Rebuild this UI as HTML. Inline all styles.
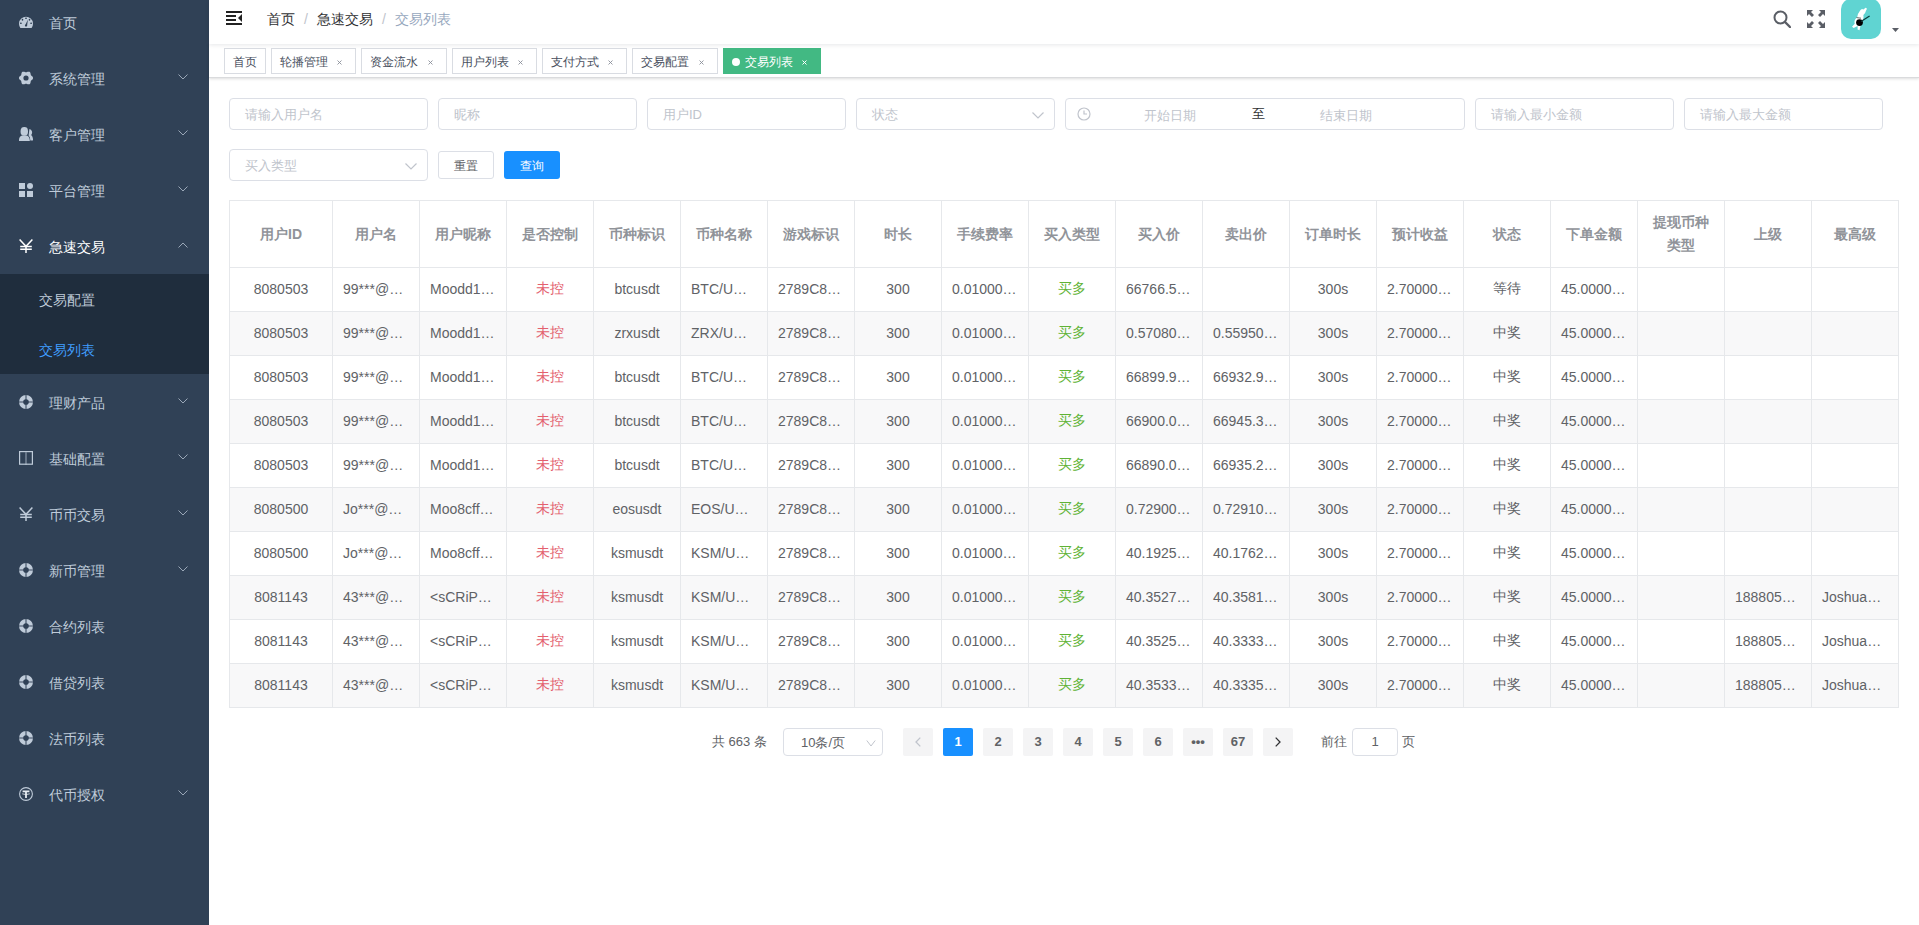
<!DOCTYPE html><html><head><meta charset="utf-8"><style>
*{box-sizing:border-box;margin:0;padding:0}
html,body{width:1919px;height:925px;overflow:hidden;background:#fff;font-family:"Liberation Sans",sans-serif;color:#606266}
.a{position:absolute}
.rn{position:absolute;z-index:5}
#sb{position:absolute;left:0;top:0;width:209px;height:925px;background:#304156;overflow:hidden}
.mi{position:absolute;left:0;width:209px;height:56px;color:#bfcbd9;font-size:14px}
.mi .t{position:absolute;left:49px;top:1px;line-height:56px;white-space:nowrap}
.mi svg.ic{position:absolute;left:19px;top:21px}
.mi svg.ar{position:absolute;left:178px;top:24px}
.sub{position:absolute;left:0;width:209px;height:50px;background:#1f2d3d;color:#bfcbd9;font-size:14px}
.sub .t{position:absolute;left:39px;top:1px;line-height:50px}
#nav{position:absolute;z-index:3;left:209px;top:0;width:1710px;height:44px;background:#fff;box-shadow:0 1px 4px rgba(0,21,41,.1)}
#tags{position:absolute;left:209px;top:44px;width:1710px;height:34px;background:#fff;border-bottom:1px solid #dadbdd;box-shadow:0 1px 3px 0 rgba(0,0,0,.12),0 0 3px 0 rgba(0,0,0,.04)}
.tag{position:absolute;top:4px;height:26px;line-height:24px;border:1px solid #d9dce2;font-size:12px;color:#495060;background:#fff;white-space:nowrap}
.tag .tx{position:absolute;left:8px;top:1px}
.tag .x{position:absolute;top:0;font-size:11px}
.inp{position:absolute;height:32px;border:1px solid #dcdfe6;border-radius:4px;background:#fff;font-size:13px;color:#c0c4cc}
.inp .p{position:absolute;left:15px;top:1px;line-height:30px;white-space:nowrap}
#tbl{position:absolute;left:229px;top:200px;border-collapse:collapse;table-layout:fixed;width:1670px}
#tbl td,#tbl th{border:1px solid #e6e8eb;text-align:center;font-size:14px;white-space:nowrap;overflow:hidden;padding:0}
#tbl th{height:67px;color:#909399;font-weight:bold;line-height:23px}
#tbl td{height:44px;color:#606266}
#tbl tr.s td{background:#f8f8f9}
#tbl td span{position:relative;top:-1px}
#tbl td.l{text-align:left;padding-left:10px}
.red{color:#e3606e!important}
.grn{color:#5fb336!important}
.pg{position:absolute;top:728px;width:30px;height:28px;background:#f4f4f5;border-radius:2px;color:#606266;font-size:13px;font-weight:bold;text-align:center;line-height:28px}
</style></head><body><div id="sb"><div class="mi" style="top:-6px;color:#bfcbd9"><svg class="ic" width="14" height="14" viewBox="0 0 14 14"><path d="M1.4 13 A7 7 0 1 1 12.6 13 Z" fill="#bfcbd9"/><g fill="#304156"><ellipse cx="7" cy="3.3" rx="1" ry="0.8"/><ellipse cx="3.5" cy="4.8" rx="0.8" ry="1"/><ellipse cx="10.5" cy="4.8" rx="0.8" ry="1"/><ellipse cx="1.9" cy="8.3" rx="1" ry="0.8"/><ellipse cx="12.1" cy="8.3" rx="1" ry="0.8"/><path d="M6.1 10.6 L8.9 4.6 L8.1 10.9Z"/><circle cx="7" cy="10.6" r="1.1"/></g></svg><span class="t">首页</span></div><div class="mi" style="top:50px;color:#bfcbd9"><svg class="ic" width="14" height="14" viewBox="0 0 14 14"><path d="M14.10 7.00 L13.98 7.61 L13.65 8.17 L13.18 8.66 L12.69 9.07 L12.25 9.45 L11.94 9.85 L11.75 10.32 L11.63 10.89 L11.53 11.53 L11.34 12.17 L11.02 12.74 L10.55 13.15 L9.96 13.35 L9.31 13.34 L8.66 13.18 L8.05 12.96 L7.50 12.77 L7.00 12.70 L6.50 12.77 L5.95 12.96 L5.34 13.18 L4.69 13.34 L4.04 13.35 L3.45 13.15 L2.98 12.74 L2.66 12.17 L2.47 11.53 L2.37 10.89 L2.25 10.32 L2.06 9.85 L1.75 9.45 L1.31 9.07 L0.82 8.66 L0.35 8.17 L0.02 7.61 L-0.10 7.00 L0.02 6.39 L0.35 5.83 L0.82 5.34 L1.31 4.93 L1.75 4.55 L2.06 4.15 L2.25 3.68 L2.37 3.11 L2.47 2.47 L2.66 1.83 L2.98 1.26 L3.45 0.85 L4.04 0.65 L4.69 0.66 L5.34 0.82 L5.95 1.04 L6.50 1.23 L7.00 1.30 L7.50 1.23 L8.05 1.04 L8.66 0.82 L9.31 0.66 L9.96 0.65 L10.55 0.85 L11.02 1.26 L11.34 1.83 L11.53 2.47 L11.63 3.11 L11.75 3.68 L11.94 4.15 L12.25 4.55 L12.69 4.93 L13.18 5.34 L13.65 5.83 L13.98 6.39Z M9.6 7 A2.6 2.6 0 1 0 4.4 7 A2.6 2.6 0 1 0 9.6 7Z" fill="#bfcbd9" fill-rule="evenodd"/></svg><span class="t">系统管理</span><svg class="ar" width="10" height="6" viewBox="0 0 10 6"><path d="M0.5 0.5 L5 5 L9.5 0.5" fill="none" stroke="#bfcbd9" stroke-width="1" opacity="0.75"/></svg></div><div class="mi" style="top:106px;color:#bfcbd9"><svg class="ic" width="14" height="14" viewBox="0 0 14 14"><path d="M10.4 1.9 A3.1 3.6 0 0 1 12.2 8 Q14.2 10 14 13 Q14 13.6 13.3 13.6 L10.9 13.6 Q11 10 9.6 8.6 Z" fill="#bfcbd9"/><g fill="#bfcbd9" stroke="#304156" stroke-width="1.1"><ellipse cx="5.3" cy="4.4" rx="3.7" ry="4.3"/><path d="M-0.1 14 Q-0.1 9.2 3.2 8.5 L7.4 8.5 Q10.8 9.2 10.8 14Z"/></g><g fill="#bfcbd9"><ellipse cx="5.3" cy="4.4" rx="3.7" ry="4.3"/><path d="M-0.1 14 Q-0.1 9.2 3.2 8.5 L7.4 8.5 Q10.8 9.2 10.8 14Z"/></g></svg><span class="t">客户管理</span><svg class="ar" width="10" height="6" viewBox="0 0 10 6"><path d="M0.5 0.5 L5 5 L9.5 0.5" fill="none" stroke="#bfcbd9" stroke-width="1" opacity="0.75"/></svg></div><div class="mi" style="top:162px;color:#bfcbd9"><svg class="ic" width="14" height="14" viewBox="0 0 14 14" fill="#bfcbd9"><rect x="0" y="0" width="6" height="6"/><circle cx="11" cy="3" r="3"/><rect x="0" y="8" width="6" height="6"/><rect x="8" y="8" width="6" height="6"/></svg><span class="t">平台管理</span><svg class="ar" width="10" height="6" viewBox="0 0 10 6"><path d="M0.5 0.5 L5 5 L9.5 0.5" fill="none" stroke="#bfcbd9" stroke-width="1" opacity="0.75"/></svg></div><div class="mi" style="top:218px;color:#ffffff"><svg class="ic" width="14" height="14" viewBox="0 0 14 14" fill="none" stroke="#ffffff" stroke-width="1.5"><path d="M0.6 0.6 L7 7.3 L13.4 0.6"/><path d="M1.2 7.4 H12.8 M1.2 10.3 H12.8 M7 7 V14"/></svg><span class="t">急速交易</span><svg class="ar" width="10" height="6" viewBox="0 0 10 6"><path d="M0.5 5.5 L5 1 L9.5 5.5" fill="none" stroke="#bfcbd9" stroke-width="1" opacity="0.75"/></svg></div><div class="sub" style="top:274px"><span class="t">交易配置</span></div><div class="sub" style="top:324px;color:#409eff"><span class="t">交易列表</span></div><div class="mi" style="top:374px"><svg class="ic" width="14" height="14" viewBox="0 0 14 14"><path d="M14 7 A7 7 0 1 0 0 7 A7 7 0 1 0 14 7Z M9.8 7 A2.8 2.8 0 1 1 4.2 7 A2.8 2.8 0 1 1 9.8 7Z" fill="#bfcbd9" fill-rule="evenodd"/><path d="M7 0 V14 M0 7 H14" stroke="#304156" stroke-width="1.1" opacity="0.9"/></svg><span class="t">理财产品</span><svg class="ar" width="10" height="6" viewBox="0 0 10 6"><path d="M0.5 0.5 L5 5 L9.5 0.5" fill="none" stroke="#bfcbd9" stroke-width="1" opacity="0.75"/></svg></div><div class="mi" style="top:430px"><svg class="ic" width="14" height="14" viewBox="0 0 14 14"><rect x="0.6" y="0.6" width="12.8" height="12.6" fill="none" stroke="#bfcbd9" stroke-width="1.2"/><path d="M7 1.2 V14" stroke="#bfcbd9" stroke-width="1.3" opacity="0.6"/></svg><span class="t">基础配置</span><svg class="ar" width="10" height="6" viewBox="0 0 10 6"><path d="M0.5 0.5 L5 5 L9.5 0.5" fill="none" stroke="#bfcbd9" stroke-width="1" opacity="0.75"/></svg></div><div class="mi" style="top:486px"><svg class="ic" width="14" height="14" viewBox="0 0 14 14" fill="none" stroke="#bfcbd9" stroke-width="1.5"><path d="M0.6 0.6 L7 7.3 L13.4 0.6"/><path d="M1.2 7.4 H12.8 M1.2 10.3 H12.8 M7 7 V14"/></svg><span class="t">币币交易</span><svg class="ar" width="10" height="6" viewBox="0 0 10 6"><path d="M0.5 0.5 L5 5 L9.5 0.5" fill="none" stroke="#bfcbd9" stroke-width="1" opacity="0.75"/></svg></div><div class="mi" style="top:542px"><svg class="ic" width="14" height="14" viewBox="0 0 14 14"><path d="M14 7 A7 7 0 1 0 0 7 A7 7 0 1 0 14 7Z M9.8 7 A2.8 2.8 0 1 1 4.2 7 A2.8 2.8 0 1 1 9.8 7Z" fill="#bfcbd9" fill-rule="evenodd"/><path d="M7 0 V14 M0 7 H14" stroke="#304156" stroke-width="1.1" opacity="0.9"/></svg><span class="t">新币管理</span><svg class="ar" width="10" height="6" viewBox="0 0 10 6"><path d="M0.5 0.5 L5 5 L9.5 0.5" fill="none" stroke="#bfcbd9" stroke-width="1" opacity="0.75"/></svg></div><div class="mi" style="top:598px"><svg class="ic" width="14" height="14" viewBox="0 0 14 14"><path d="M14 7 A7 7 0 1 0 0 7 A7 7 0 1 0 14 7Z M9.8 7 A2.8 2.8 0 1 1 4.2 7 A2.8 2.8 0 1 1 9.8 7Z" fill="#bfcbd9" fill-rule="evenodd"/><path d="M7 0 V14 M0 7 H14" stroke="#304156" stroke-width="1.1" opacity="0.9"/></svg><span class="t">合约列表</span></div><div class="mi" style="top:654px"><svg class="ic" width="14" height="14" viewBox="0 0 14 14"><path d="M14 7 A7 7 0 1 0 0 7 A7 7 0 1 0 14 7Z M9.8 7 A2.8 2.8 0 1 1 4.2 7 A2.8 2.8 0 1 1 9.8 7Z" fill="#bfcbd9" fill-rule="evenodd"/><path d="M7 0 V14 M0 7 H14" stroke="#304156" stroke-width="1.1" opacity="0.9"/></svg><span class="t">借贷列表</span></div><div class="mi" style="top:710px"><svg class="ic" width="14" height="14" viewBox="0 0 14 14"><path d="M14 7 A7 7 0 1 0 0 7 A7 7 0 1 0 14 7Z M9.8 7 A2.8 2.8 0 1 1 4.2 7 A2.8 2.8 0 1 1 9.8 7Z" fill="#bfcbd9" fill-rule="evenodd"/><path d="M7 0 V14 M0 7 H14" stroke="#304156" stroke-width="1.1" opacity="0.9"/></svg><span class="t">法币列表</span></div><div class="mi" style="top:766px"><svg class="ic" width="14" height="14" viewBox="0 0 14 14"><circle cx="7" cy="7" r="6.4" fill="none" stroke="#bfcbd9" stroke-width="1.1"/><path d="M3.6 3.6 H10.4 V5.2 H7.9 V11 H6.1 V5.2 H3.6Z" fill="#e8edf3"/><path d="M3.2 6.8 Q7 8.4 10.8 6.8" fill="none" stroke="#e8edf3" stroke-width="0.8"/></svg><span class="t">代币授权</span><svg class="ar" width="10" height="6" viewBox="0 0 10 6"><path d="M0.5 0.5 L5 5 L9.5 0.5" fill="none" stroke="#bfcbd9" stroke-width="1" opacity="0.75"/></svg></div></div><div id="nav"><svg class="a" style="left:17px;top:11px" width="16" height="14" viewBox="0 0 16 14"><rect x="0" y="0" width="16" height="2" fill="#222"/><rect x="0" y="4" width="10" height="2" fill="#222"/><rect x="0" y="8" width="10" height="2" fill="#222"/><rect x="0" y="12" width="16" height="2" fill="#222"/><path d="M16 3 L12 7 L16 11Z" fill="#222"/></svg><div class="a" style="left:58px;top:0;line-height:38px;font-size:14px;color:#303133;white-space:nowrap">首页<span style="color:#c0c4cc;margin:0 9px">/</span>急速交易<span style="color:#c0c4cc;margin:0 9px">/</span><span style="color:#97a8be">交易列表</span></div></div><div id="tags"><div class="tag" style="left:15px;width:42px"><span class="tx">首页</span></div><div class="tag" style="left:62px;width:85px"><span class="tx">轮播管理</span><svg class="a" style="left:65px;top:11px" width="5" height="5" viewBox="0 0 5 5"><path d="M0.5 0.5 L4.5 4.5 M4.5 0.5 L0.5 4.5" stroke="#8a8f99" stroke-width="0.9"/></svg></div><div class="tag" style="left:152px;width:86px"><span class="tx">资金流水</span><svg class="a" style="left:66px;top:11px" width="5" height="5" viewBox="0 0 5 5"><path d="M0.5 0.5 L4.5 4.5 M4.5 0.5 L0.5 4.5" stroke="#8a8f99" stroke-width="0.9"/></svg></div><div class="tag" style="left:243px;width:85px"><span class="tx">用户列表</span><svg class="a" style="left:65px;top:11px" width="5" height="5" viewBox="0 0 5 5"><path d="M0.5 0.5 L4.5 4.5 M4.5 0.5 L0.5 4.5" stroke="#8a8f99" stroke-width="0.9"/></svg></div><div class="tag" style="left:333px;width:85px"><span class="tx">支付方式</span><svg class="a" style="left:65px;top:11px" width="5" height="5" viewBox="0 0 5 5"><path d="M0.5 0.5 L4.5 4.5 M4.5 0.5 L0.5 4.5" stroke="#8a8f99" stroke-width="0.9"/></svg></div><div class="tag" style="left:423px;width:86px"><span class="tx">交易配置</span><svg class="a" style="left:66px;top:11px" width="5" height="5" viewBox="0 0 5 5"><path d="M0.5 0.5 L4.5 4.5 M4.5 0.5 L0.5 4.5" stroke="#8a8f99" stroke-width="0.9"/></svg></div><div class="tag" style="left:514px;width:98px;background:#42b983;border-color:#42b983;color:#fff"><span class="a" style="left:8px;top:9px;width:8px;height:8px;border-radius:50%;background:#fff"></span><span class="tx" style="left:21px">交易列表</span><svg class="a" style="left:78px;top:11px" width="5" height="5" viewBox="0 0 5 5"><path d="M0.5 0.5 L4.5 4.5 M4.5 0.5 L0.5 4.5" stroke="#fff" stroke-width="1"/></svg></div></div><div class="inp" style="left:229px;top:98px;width:199px"><span class="p">请输入用户名</span></div><div class="inp" style="left:438px;top:98px;width:199px"><span class="p">昵称</span></div><div class="inp" style="left:647px;top:98px;width:199px"><span class="p">用户ID</span></div><div class="inp" style="left:856px;top:98px;width:199px"><span class="p">状态</span><svg class="a" style="left:175px;top:13px" width="12" height="7" viewBox="0 0 12 7"><path d="M0.5 0.5 L6 6 L11.5 0.5" fill="none" stroke="#c0c4cc" stroke-width="1.2"/></svg></div><div class="inp" style="left:1065px;top:98px;width:400px"><svg class="a" style="left:11px;top:8px" width="14" height="14" viewBox="0 0 14 14"><circle cx="7" cy="7" r="6" fill="none" stroke="#c0c4cc" stroke-width="1.2"/><path d="M7 3.5 V7 H10" fill="none" stroke="#c0c4cc" stroke-width="1.2"/></svg><span class="p" style="left:78px;top:2px">开始日期</span><span class="a" style="left:186px;top:0;line-height:29px;color:#303133">至</span><span class="p" style="left:254px;top:2px">结束日期</span></div><div class="inp" style="left:1475px;top:98px;width:199px"><span class="p">请输入最小金额</span></div><div class="inp" style="left:1684px;top:98px;width:199px"><span class="p">请输入最大金额</span></div><div class="inp" style="left:229px;top:149px;width:199px"><span class="p">买入类型</span><svg class="a" style="left:175px;top:13px" width="12" height="7" viewBox="0 0 12 7"><path d="M0.5 0.5 L6 6 L11.5 0.5" fill="none" stroke="#c0c4cc" stroke-width="1.2"/></svg></div><div class="a" style="left:438px;top:151px;width:56px;height:28px;border:1px solid #dcdfe6;border-radius:3px;font-size:12px;color:#606266;text-align:center;line-height:28px">重置</div><div class="a" style="left:504px;top:151px;width:56px;height:28px;background:#1890ff;border-radius:3px;font-size:12px;color:#fff;text-align:center;line-height:30px">查询</div><table id="tbl"><colgroup><col style="width:103px"><col style="width:87px"><col style="width:87px"><col style="width:87px"><col style="width:87px"><col style="width:87px"><col style="width:87px"><col style="width:87px"><col style="width:87px"><col style="width:87px"><col style="width:87px"><col style="width:87px"><col style="width:87px"><col style="width:87px"><col style="width:87px"><col style="width:87px"><col style="width:87px"><col style="width:87px"><col style="width:87px"></colgroup><tr><th>用户ID</th><th>用户名</th><th>用户昵称</th><th>是否控制</th><th>币种标识</th><th>币种名称</th><th>游戏标识</th><th>时长</th><th>手续费率</th><th>买入类型</th><th>买入价</th><th>卖出价</th><th>订单时长</th><th>预计收益</th><th>状态</th><th>下单金额</th><th>提现币种<br>类型</th><th>上级</th><th>最高级</th></tr><tr><td><span>8080503</span></td><td class="l"><span>99***@…</span></td><td class="l"><span>Moodd1…</span></td><td class="red"><span>未控</span></td><td><span>btcusdt</span></td><td class="l"><span>BTC/U…</span></td><td class="l"><span>2789C8…</span></td><td><span>300</span></td><td class="l"><span>0.01000…</span></td><td class="grn"><span>买多</span></td><td class="l"><span>66766.5…</span></td><td></td><td><span>300s</span></td><td class="l"><span>2.70000…</span></td><td><span>等待</span></td><td class="l"><span>45.0000…</span></td><td></td><td></td><td></td></tr><tr class="s"><td><span>8080503</span></td><td class="l"><span>99***@…</span></td><td class="l"><span>Moodd1…</span></td><td class="red"><span>未控</span></td><td><span>zrxusdt</span></td><td class="l"><span>ZRX/U…</span></td><td class="l"><span>2789C8…</span></td><td><span>300</span></td><td class="l"><span>0.01000…</span></td><td class="grn"><span>买多</span></td><td class="l"><span>0.57080…</span></td><td class="l"><span>0.55950…</span></td><td><span>300s</span></td><td class="l"><span>2.70000…</span></td><td><span>中奖</span></td><td class="l"><span>45.0000…</span></td><td></td><td></td><td></td></tr><tr><td><span>8080503</span></td><td class="l"><span>99***@…</span></td><td class="l"><span>Moodd1…</span></td><td class="red"><span>未控</span></td><td><span>btcusdt</span></td><td class="l"><span>BTC/U…</span></td><td class="l"><span>2789C8…</span></td><td><span>300</span></td><td class="l"><span>0.01000…</span></td><td class="grn"><span>买多</span></td><td class="l"><span>66899.9…</span></td><td class="l"><span>66932.9…</span></td><td><span>300s</span></td><td class="l"><span>2.70000…</span></td><td><span>中奖</span></td><td class="l"><span>45.0000…</span></td><td></td><td></td><td></td></tr><tr class="s"><td><span>8080503</span></td><td class="l"><span>99***@…</span></td><td class="l"><span>Moodd1…</span></td><td class="red"><span>未控</span></td><td><span>btcusdt</span></td><td class="l"><span>BTC/U…</span></td><td class="l"><span>2789C8…</span></td><td><span>300</span></td><td class="l"><span>0.01000…</span></td><td class="grn"><span>买多</span></td><td class="l"><span>66900.0…</span></td><td class="l"><span>66945.3…</span></td><td><span>300s</span></td><td class="l"><span>2.70000…</span></td><td><span>中奖</span></td><td class="l"><span>45.0000…</span></td><td></td><td></td><td></td></tr><tr><td><span>8080503</span></td><td class="l"><span>99***@…</span></td><td class="l"><span>Moodd1…</span></td><td class="red"><span>未控</span></td><td><span>btcusdt</span></td><td class="l"><span>BTC/U…</span></td><td class="l"><span>2789C8…</span></td><td><span>300</span></td><td class="l"><span>0.01000…</span></td><td class="grn"><span>买多</span></td><td class="l"><span>66890.0…</span></td><td class="l"><span>66935.2…</span></td><td><span>300s</span></td><td class="l"><span>2.70000…</span></td><td><span>中奖</span></td><td class="l"><span>45.0000…</span></td><td></td><td></td><td></td></tr><tr class="s"><td><span>8080500</span></td><td class="l"><span>Jo***@…</span></td><td class="l"><span>Moo8cff…</span></td><td class="red"><span>未控</span></td><td><span>eosusdt</span></td><td class="l"><span>EOS/U…</span></td><td class="l"><span>2789C8…</span></td><td><span>300</span></td><td class="l"><span>0.01000…</span></td><td class="grn"><span>买多</span></td><td class="l"><span>0.72900…</span></td><td class="l"><span>0.72910…</span></td><td><span>300s</span></td><td class="l"><span>2.70000…</span></td><td><span>中奖</span></td><td class="l"><span>45.0000…</span></td><td></td><td></td><td></td></tr><tr><td><span>8080500</span></td><td class="l"><span>Jo***@…</span></td><td class="l"><span>Moo8cff…</span></td><td class="red"><span>未控</span></td><td><span>ksmusdt</span></td><td class="l"><span>KSM/U…</span></td><td class="l"><span>2789C8…</span></td><td><span>300</span></td><td class="l"><span>0.01000…</span></td><td class="grn"><span>买多</span></td><td class="l"><span>40.1925…</span></td><td class="l"><span>40.1762…</span></td><td><span>300s</span></td><td class="l"><span>2.70000…</span></td><td><span>中奖</span></td><td class="l"><span>45.0000…</span></td><td></td><td></td><td></td></tr><tr class="s"><td><span>8081143</span></td><td class="l"><span>43***@…</span></td><td class="l"><span>&lt;sCRiP…</span></td><td class="red"><span>未控</span></td><td><span>ksmusdt</span></td><td class="l"><span>KSM/U…</span></td><td class="l"><span>2789C8…</span></td><td><span>300</span></td><td class="l"><span>0.01000…</span></td><td class="grn"><span>买多</span></td><td class="l"><span>40.3527…</span></td><td class="l"><span>40.3581…</span></td><td><span>300s</span></td><td class="l"><span>2.70000…</span></td><td><span>中奖</span></td><td class="l"><span>45.0000…</span></td><td></td><td class="l"><span>188805…</span></td><td class="l"><span>Joshua…</span></td></tr><tr><td><span>8081143</span></td><td class="l"><span>43***@…</span></td><td class="l"><span>&lt;sCRiP…</span></td><td class="red"><span>未控</span></td><td><span>ksmusdt</span></td><td class="l"><span>KSM/U…</span></td><td class="l"><span>2789C8…</span></td><td><span>300</span></td><td class="l"><span>0.01000…</span></td><td class="grn"><span>买多</span></td><td class="l"><span>40.3525…</span></td><td class="l"><span>40.3333…</span></td><td><span>300s</span></td><td class="l"><span>2.70000…</span></td><td><span>中奖</span></td><td class="l"><span>45.0000…</span></td><td></td><td class="l"><span>188805…</span></td><td class="l"><span>Joshua…</span></td></tr><tr class="s"><td><span>8081143</span></td><td class="l"><span>43***@…</span></td><td class="l"><span>&lt;sCRiP…</span></td><td class="red"><span>未控</span></td><td><span>ksmusdt</span></td><td class="l"><span>KSM/U…</span></td><td class="l"><span>2789C8…</span></td><td><span>300</span></td><td class="l"><span>0.01000…</span></td><td class="grn"><span>买多</span></td><td class="l"><span>40.3533…</span></td><td class="l"><span>40.3335…</span></td><td><span>300s</span></td><td class="l"><span>2.70000…</span></td><td><span>中奖</span></td><td class="l"><span>45.0000…</span></td><td></td><td class="l"><span>188805…</span></td><td class="l"><span>Joshua…</span></td></tr></table><div class="a" style="left:712px;top:728px;line-height:28px;font-size:13px;color:#606266;white-space:nowrap">共 663 条</div><div class="inp" style="left:783px;top:728px;width:100px;height:28px;color:#606266"><span class="p" style="left:17px;line-height:26px">10条/页</span><svg class="a" style="left:82px;top:11px" width="10" height="7" viewBox="0 0 10 7"><path d="M0.8 0.5 L5 6 L9.2 0.5" fill="none" stroke="#c0c4cc" stroke-width="1"/></svg></div><div class="pg" style="left:903px"><svg class="a" style="left:12px;top:9px" width="6" height="10" viewBox="0 0 6 10"><path d="M5.3 0.6 L1 5 L5.3 9.4" fill="none" stroke="#c0c4cc" stroke-width="1.3"/></svg></div><div class="pg" style="left:943px;background:#1890ff;color:#fff;">1</div><div class="pg" style="left:983px;">2</div><div class="pg" style="left:1023px;">3</div><div class="pg" style="left:1063px;">4</div><div class="pg" style="left:1103px;">5</div><div class="pg" style="left:1143px;">6</div><div class="pg" style="left:1183px;">•••</div><div class="pg" style="left:1223px;">67</div><div class="pg" style="left:1263px"><svg class="a" style="left:12px;top:9px" width="6" height="10" viewBox="0 0 6 10"><path d="M0.7 0.6 L5 5 L0.7 9.4" fill="none" stroke="#303133" stroke-width="1.3"/></svg></div><div class="a" style="left:1321px;top:728px;line-height:28px;font-size:13px;color:#606266">前往</div><div class="inp" style="left:1352px;top:728px;width:46px;height:28px;color:#606266;text-align:center"><span style="line-height:26px">1</span></div><div class="a" style="left:1402px;top:728px;line-height:28px;font-size:13px;color:#606266">页</div><svg class="rn" style="left:1773px;top:10px" width="18" height="18" viewBox="0 0 18 18"><circle cx="7.5" cy="7.5" r="6" fill="none" stroke="#5a5e66" stroke-width="2"/><path d="M12 12 L17 17" stroke="#5a5e66" stroke-width="2.4" stroke-linecap="round"/></svg><svg class="rn" style="left:1807px;top:10px" width="18" height="18" viewBox="0 0 18 18" fill="#5a5e66"><path d="M0 0H6L4 2 7 5 5 7 2 4 0 6Z"/><path d="M18 0V6L16 4 13 7 11 5 14 2 12 0Z"/><path d="M0 18V12L2 14 5 11 7 13 4 16 6 18Z"/><path d="M18 18H12L14 16 11 13 13 11 16 14 18 12Z"/></svg><div class="rn" style="left:1841px;top:-1px;width:40px;height:40px;border-radius:10px;background:#60d4d2"></div><svg class="rn" style="left:1841px;top:-1px" width="40" height="40" viewBox="0 0 40 40"><g transform="rotate(24 18 20)"><path d="M15.5 12 Q16 9 18.2 9.6 L19.4 7 Q21.6 6.4 21 9.6 Q21.6 12.6 20.4 14.6 Q22.8 18 21.8 24 L23 30 L21 30.2 L19.6 27 L16.8 30.4 L14.8 30 L16 26 Q13.6 23.6 15.6 19 Q14.6 15 15.5 12Z" fill="#fff"/></g><circle cx="18.5" cy="23.6" r="3.4" fill="#000"/><path d="M20 22.6 L28.6 17" stroke="#0a3a3a" stroke-width="1.2"/><path d="M15.5 18.6 L20 19.2" stroke="#444" stroke-width="0.8"/></svg><svg class="rn" style="left:1892px;top:28px" width="7" height="4" viewBox="0 0 7 4"><path d="M0 0H7L3.5 4Z" fill="#5a5e66"/></svg></body></html>
